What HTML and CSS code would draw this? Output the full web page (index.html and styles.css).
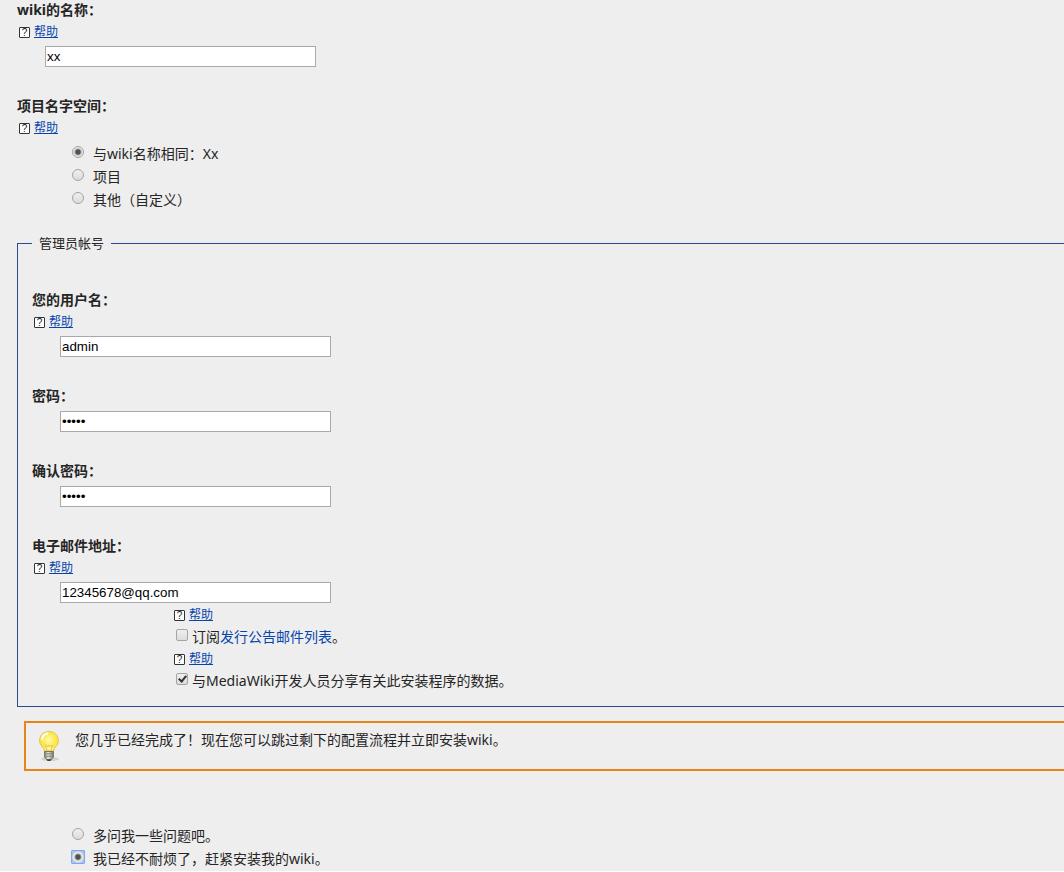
FILE: index.html
```
<!DOCTYPE html>
<html lang="zh-CN">
<head>
  <meta charset="UTF-8">
  <meta name="viewport" content="width=device-width, initial-scale=1.0">
  <title>MediaWiki 安装</title>
  <link rel="stylesheet" href="styles.css">
</head>
<body>

  <form class="page">

    <!-- Wiki name -->
    <div class="block">
      <label class="block-label" for="sitename">wiki的名称：</label>
      <div class="help"><a href="#">帮助</a></div>
      <input class="text-box" type="text" id="sitename" value="xx">
    </div>

    <!-- Project namespace -->
    <div class="block namespace" role="radiogroup" aria-labelledby="ns-label">
      <div class="block-label" id="ns-label">项目名字空间：</div>
      <div class="help"><a href="#">帮助</a></div>
      <ul class="radios">
        <li><input type="radio" name="ns" id="ns-same" checked><label for="ns-same">与wiki名称相同：Xx</label></li>
        <li><input type="radio" name="ns" id="ns-project"><label for="ns-project">项目</label></li>
        <li><input type="radio" name="ns" id="ns-other"><label for="ns-other">其他（自定义）</label></li>
      </ul>
    </div>

    <!-- Administrator account -->
    <fieldset class="admin">
      <legend>管理员帐号</legend>

      <div class="block">
        <label class="block-label" for="admin-name">您的用户名：</label>
        <div class="help"><a href="#">帮助</a></div>
        <input class="text-box" type="text" id="admin-name" value="admin">
      </div>

      <div class="block">
        <label class="block-label" for="password">密码：</label>
        <input class="text-box" type="password" id="password" value="admin">
      </div>

      <div class="block">
        <label class="block-label" for="password2">确认密码：</label>
        <input class="text-box" type="password" id="password2" value="admin">
      </div>

      <div class="block">
        <label class="block-label" for="email">电子邮件地址：</label>
        <div class="help"><a href="#">帮助</a></div>
        <input class="text-box" type="text" id="email" value="12345678@qq.com">
      </div>

      <div class="checks">
        <div class="help"><a href="#">帮助</a></div>
        <div class="check"><input type="checkbox" id="subscribe"><label for="subscribe">订阅<a href="#">发行公告邮件列表</a>。</label></div>
        <div class="help"><a href="#">帮助</a></div>
        <div class="check"><input type="checkbox" id="pingback" checked><label for="pingback">与MediaWiki开发人员分享有关此安装程序的数据。</label></div>
      </div>
    </fieldset>

    <!-- Tip -->
    <div class="tip">
      <svg class="bulb" width="24" height="32" viewBox="0 0 24 32" aria-hidden="true">
        <defs>
          <radialGradient id="glass" cx="50%" cy="42%" r="58%">
            <stop offset="0" stop-color="#fffbb0"/>
            <stop offset="0.5" stop-color="#fdec58"/>
            <stop offset="1" stop-color="#f7d838"/>
          </radialGradient>
          <linearGradient id="cap">
            <stop offset="0" stop-color="#77776a"/>
            <stop offset="0.4" stop-color="#e8e8d8"/>
            <stop offset="1" stop-color="#77776a"/>
          </linearGradient>
        </defs>
        <ellipse cx="13" cy="29" rx="9" ry="2" fill="#d2d2d2"/>
        <path d="M12 1.500C6.500 1.500 2.500 5.500 2.500 10.500c0 4 2.500 5.500 4 8 .6 1 .8 2 1 3.500h9c.2-1.500.4-2.500 1-3.500 1.500-2.500 4-4 4-8 0-5-4-9-9.500-9z" fill="url(#glass)" stroke="#e8c850"/>
        <path d="M8 19.500l-.5-2h9l-.5 2" fill="#fff8cc"/>
        <path d="M10 21L8.500 15l2 1.500 1.500-1.500 1.500 1.500 2-1.500L14 21" fill="none" stroke="#e5c656"/>
        <path d="M5 9c.5-3 2.500-5 5.500-5.500" fill="none" stroke="#fff" stroke-width="2" stroke-linecap="round"/>
        <path d="M7.500 21.500h9V27l-2 2.500h-5l-2-2.500z" fill="url(#cap)" stroke="#77776a"/>
        <path d="M7.500 24l9-.5M7.500 26.500l9-.5" stroke="#88887a"/>
        <path d="M9.500 29.500h5l-1 1.500h-3z" fill="#444"/>
      </svg>
      <p>您几乎已经完成了！现在您可以跳过剩下的配置流程并立即安装wiki。</p>
    </div>

    <!-- Continue or install now -->
    <ul class="radios">
      <li><input type="radio" name="continue" id="ask-more"><label for="ask-more">多问我一些问题吧。</label></li>
      <li><input class="focused" type="radio" name="continue" id="install-now" checked><label for="install-now">我已经不耐烦了，赶紧安装我的wiki。</label></li>
    </ul>

  </form>

</body>
</html>
```
FILE: styles.css
```
*,
*::before {
  box-sizing: border-box;
}

body {
  margin: 0;
  background: #fff;
  color: #252525;
  font-family: "Noto Sans", "Noto Sans CJK SC", sans-serif;
  font-size: 14px;
  line-height: 20px;
}

a {
  color: #0645ad;
  text-decoration: none;
}

ul {
  list-style: none;
  margin: 0;
  padding: 0;
}

/* the frames run on past the right edge */
.page {
  padding: 0 0 1px 17px;
  background: #eee;
  overflow: hidden;
}

.block {
  margin-bottom: 29px;
}

.block-label {
  display: block;
  margin-bottom: 5px;
  font-weight: bold;
}

.namespace {
  margin-bottom: 22px;
}

.help {
  display: flex;
  align-items: center;
  gap: 4px;
  height: 20px;
  padding-left: 2px;
  font-size: 12px;
}

.block-label + .help {
  margin: -3px 0 4px;
}

.help::before {
  content: "?";
  width: 11px;
  height: 11px;
  border: 1px solid #333;
  border-radius: 1px;
  background: #fff;
  color: #222;
  font: 10px/9px "Liberation Sans", sans-serif;
  text-align: center;
}

.help a {
  text-decoration: underline;
}

.text-box {
  display: block;
  width: 271px;
  height: 21px;
  margin-left: 28px;
  padding: 1px;
  border: 1px solid #a9a9a9;
  background: #fff;
  color: #000;
  font-family: "Liberation Sans", sans-serif;
}

/* Radios and checkboxes */
input[type="radio"],
input[type="checkbox"] {
  appearance: none;
  flex: none;
  width: 12px;
  height: 12px;
  margin: 2px 0 0;
  border: 1px solid #a4a4a4;
  background: linear-gradient(#efefef, #dcdcdc);
}

input[type="radio"] {
  border-radius: 50%;
}

input[type="checkbox"] {
  border-radius: 2px;
}

input[type="radio"]:checked {
  background: radial-gradient(circle, #505050 2px, #e6e6e6 4px);
}

input[type="checkbox"]:checked::before {
  content: "";
  display: block;
  width: 5px;
  height: 8px;
  margin: 0 0 0 3px;
  border: solid #333;
  border-width: 0 2px 2px 0;
  transform: rotate(40deg);
}

/* square focus ring round the dot */
input[type="radio"].focused {
  width: 14px;
  height: 14px;
  margin: 1px -1px 0;
  border: 1px solid #7fa9e6;
  border-radius: 1px;
  background: radial-gradient(circle, #505050 2px, #e6e6e6 4px, #e6e6e6 5px, #a9c4ec 6px);
}

.radios {
  padding-left: 55px;
}

.radios li {
  display: flex;
  align-items: flex-start;
  gap: 9px;
  padding: 2px 0 1px;
}

/* Administrator account */
.admin {
  margin: 0 -20px 14px 0;
  padding: 37px 14px 15px;
  border: 1px solid #2a4b8d;
}

.admin legend {
  padding: 0 7px;
  font-size: 13px;
}

.admin .block:nth-last-child(2) {
  margin-bottom: 0;
}

.checks {
  padding-left: 140px;
}

.checks .help {
  margin: 2px 0;
}

.check {
  display: flex;
  align-items: flex-start;
  gap: 4px;
  padding-left: 4px;
}

/* Tip */
.tip {
  display: flex;
  align-items: flex-start;
  gap: 14px;
  margin: 0 -20px 53px 7px;
  padding: 7px 11px;
  border: 2px solid #e8841a;
}

.tip p {
  margin: 0;
}
```
